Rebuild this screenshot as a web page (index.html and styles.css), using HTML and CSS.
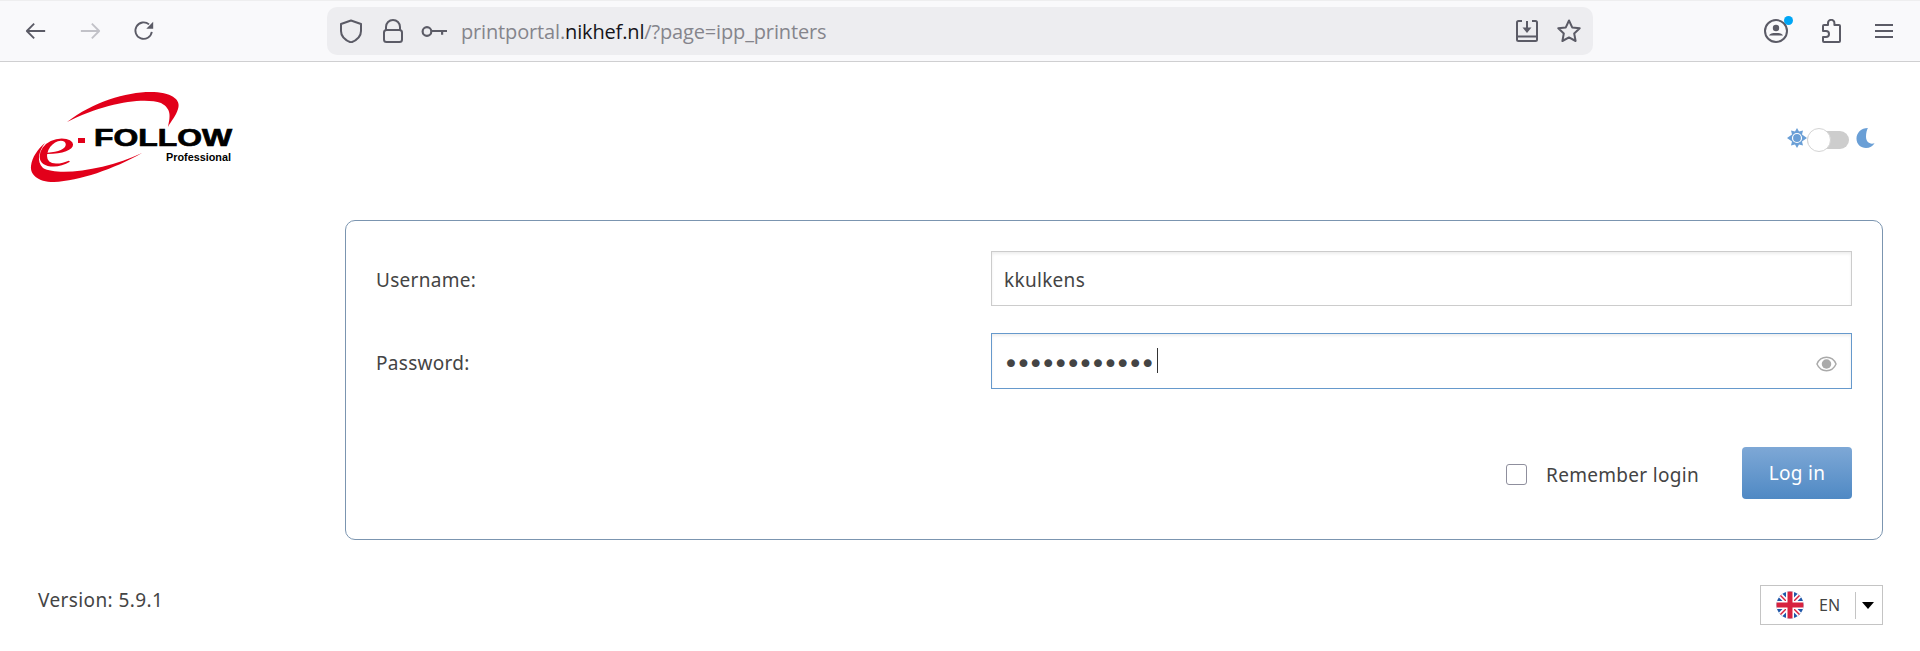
FILE: index.html
```html
<!DOCTYPE HTML>
<html>
    <head>
        <title>e-Follow Login</title>
        <link rel="stylesheet" href="styles.css">
    </head>

    <body>
        <div class="toolbar">
            <div class="nav-buttons">
                <svg class="icon" viewBox="0 0 24 24"><path d="M22 12H2M10 4l-8 8 8 8"/></svg>
                <svg class="icon icon-off" viewBox="0 0 24 24"><path d="M2 12h20M14 4l8 8-8 8"/></svg>
                <svg class="icon" viewBox="0 0 24 24"><path d="M20.500 13a9 9 0 1 1-3-8.200"/><path class="fill" d="M22 2v7.500h-7.500z"/></svg>
            </div>
            <div class="urlbar">
                <svg class="icon shield" viewBox="0 0 24 24"><path d="M12 1.500l10 3.500v7c0 5.500-5 9.500-10 11.500C7 21.500 2 17.500 2 12V5z"/></svg>
                <svg class="icon lock" viewBox="0 0 24 24"><path d="M5 11V8a7 7 0 0 1 14 0v3"/><rect x="3" y="11" width="18" height="12" rx="2.500"/></svg>
                <svg class="icon key" viewBox="0 0 24 12"><circle cx="5.500" cy="6" r="4"/><path d="M9.500 5.500H24M19.500 5.500V9"/></svg>
                <div class="url"><span class="dim">printportal.</span>nikhef.nl<span class="dim">/?page=ipp_printers</span></div>
                <svg class="icon save" viewBox="0 0 24 24"><path d="M7 2H3.500A1.500 1.500 0 0 0 2 3.500v17A1.500 1.500 0 0 0 3.500 22h17a1.500 1.500 0 0 0 1.500-1.500v-17A1.500 1.500 0 0 0 20.500 2H17M2 17.500h20M12 2v7"/><path class="fill" d="M7.500 8.500h9L12 14z"/></svg>
                <svg class="icon star" viewBox="0 0 24 24"><path d="M12 1.500l3.200 6.900 7.500.9-5.500 5.200 1.400 7.500L12 18.400l-6.600 3.600 1.400-7.500-5.500-5.200 7.500-.9z"/></svg>
            </div>
            <div class="tool-buttons">
                <div class="account">
                    <svg class="icon" viewBox="0 0 24 24"><circle cx="12" cy="12" r="11"/><circle class="fill" cx="12" cy="9" r="3.200"/><path class="fill" d="M5 16.500c1-2 3-2.500 7-2.500s6 .5 7 2.500z"/></svg>
                    <span class="badge"></span>
                </div>
                <svg class="icon puzzle" viewBox="0 0 20 24"><path d="M7 5.500V4a3.200 3.200 0 0 1 6.400 0v2H18a1 1 0 0 1 1 1v15a1 1 0 0 1-1 1H3a1 1 0 0 1-1-1v-4h3a3 3 0 0 0 0-6H2V7a1 1 0 0 1 1-1h4z"/></svg>
                <svg class="icon menu" viewBox="0 0 18 14"><path d="M0 1h18M0 7h18M0 13h18"/></svg>
            </div>
        </div>

        <div class="header">
            <svg class="logo" viewBox="0 0 205 95">
                <path class="swoosh" d="M38 33C65 12 100 2 125 3C145 4 152 12 149 20C147 27 142 32 139 38C141 28 143 20 132 14C115 8 75 14 38 33Z"/>
                <path class="swoosh" d="M113 64C85 80 50 92 25 93C8 93 1 85 2 77C3 68 9 60 16 54C10 62 7 72 14 79C30 88 80 80 113 64Z"/>
                <text class="logo-e" x="8" y="77" textLength="38" lengthAdjust="spacingAndGlyphs">e</text>
                <rect class="swoosh" x="49" y="49" width="7" height="5"/>
                <text class="logo-name" x="65" y="57" textLength="138" lengthAdjust="spacingAndGlyphs">FOLLOW</text>
                <text class="logo-sub" x="137" y="72" textLength="65" lengthAdjust="spacingAndGlyphs">Professional</text>
            </svg>
            <div class="theme-toggle">
                <svg class="theme-icon" viewBox="0 0 20 20">
                    <path class="sun-rays" d="M10 0l2 3.500 4-1-1 4 5 3.500-5 3.500 1 4-4-1-2 3.500-2-3.500-4 1 1-4L0 10l5-3.500-1-4 4 1z"/>
                    <circle cx="10" cy="10" r="4.500" class="sun-ring"/>
                </svg>
                <div class="track"><span class="knob"></span></div>
                <svg class="theme-icon moon" viewBox="0 0 20 21"><path d="M12 0C5 0 0 5 0 11s4.500 10 10 10c4 0 7-2 9-5-5 1.500-9-1-9-7 0-4 1-7 2-9z"/></svg>
            </div>
        </div>

        <div class="login-box">
            <div class="form-row">
                <label class="form-label">Username:</label>
                <input class="text-input" type="text" value="kkulkens">
            </div>
            <div class="form-row">
                <label class="form-label">Password:</label>
                <div class="password-wrap">
                    <input class="text-input focused" type="password" value="kkulkens2024">
                    <span class="caret"></span>
                    <svg class="eye" viewBox="0 0 22 16"><path d="M11 1C6 1 2.500 4.500 1 8c1.500 3.500 5 7 10 7s8.500-3.500 10-7c-1.500-3.500-5-7-10-7z"/><circle cx="11" cy="8" r="5"/></svg>
                </div>
            </div>
            <div class="actions">
                <span class="checkbox"></span>
                <span class="remember">Remember login</span>
                <button class="login-button">Log in</button>
            </div>
        </div>

        <div class="footer">
            <div class="version">Version: 5.9.1</div>
            <div class="language">
                <svg class="flag" viewBox="0 0 28 28">
                    <clipPath id="flag_clip"><circle cx="14" cy="14" r="13.500"/></clipPath>
                    <g clip-path="url(#flag_clip)">
                        <rect width="28" height="28" fill="#1f57a8"/>
                        <path d="M0 0l28 28M28 0L0 28" stroke="#fff" stroke-width="5"/>
                        <path d="M0 0l28 28M28 0L0 28" stroke="#d8223f" stroke-width="1.500"/>
                        <path d="M14 0v28M0 14h28" stroke="#fff" stroke-width="8"/>
                        <path d="M14 0v28M0 14h28" stroke="#d8223f" stroke-width="5"/>
                    </g>
                </svg>
                <span class="lang-code">EN</span>
                <span class="lang-arrow"></span>
            </div>
        </div>
    </body>
</html>
```

FILE: styles.css
```css
body {
    margin: 0;
    font-family: "Noto Sans", sans-serif;
    color: #444;
    background-color: white;
    height: 651px;
    overflow: hidden;
}
.toolbar {
    display: flex;
    align-items: center;
    height: 60px;
    padding-left: 25px;
    background-color: #f9f9fb;
    border-top: 1px solid #eeeeef;
    border-bottom: 1px solid #cfcfd1;
}
.icon {
    fill: none;
    stroke: #5b5b66;
    stroke-width: 2;
    stroke-linejoin: round;
    width: 22px;
    height: 22px;
    flex: none;
}
.icon .fill {
    fill: #5b5b66;
    stroke: none;
}
.icon-off {
    stroke: #c2c2c8;
}
.nav-buttons {
    display: flex;
    gap: 32px;
    width: 302px;
}
.urlbar {
    display: flex;
    align-items: center;
    width: 1266px;
    height: 48px;
    padding-left: 12px;
    box-sizing: border-box;
    background-color: #ededf0;
    border-radius: 10px;
}
.shield {
    width: 24px;
    height: 24px;
}
.lock {
    width: 24px;
    height: 24px;
    margin-left: 18px;
}
.key {
    width: 26px;
    height: 13px;
    margin-left: 16px;
}
.url {
    font-family: "Open Sans", sans-serif;
    font-size: 20px;
    color: #15141a;
    margin-left: 14px;
    flex: 1;
    letter-spacing: -0.15px;
}
.dim {
    color: #85858c;
}
.save {
    width: 24px;
    height: 24px;
}
.star {
    width: 24px;
    height: 24px;
    margin: 0 12px 0 18px;
}
.tool-buttons {
    display: flex;
    align-items: center;
    margin-left: 171px;
}
.account {
    position: relative;
    height: 24px;
}
.account .icon {
    width: 24px;
    height: 24px;
}
.badge {
    position: absolute;
    top: -3px;
    right: -5px;
    width: 9px;
    height: 9px;
    border-radius: 50%;
    background-color: #00a6f5;
}
.puzzle {
    width: 20px;
    height: 24px;
    margin-left: 33px;
}
.menu {
    width: 18px;
    height: 14px;
    margin-left: 34px;
}
.header {
    display: flex;
    justify-content: space-between;
    height: 131px;
    padding: 27px 44px 0 29px;
}
.logo {
    width: 205px;
    height: 95px;
}
.swoosh {
    fill: #e2001a;
}
.logo-e {
    font-family: "Liberation Serif", serif;
    font-style: italic;
    font-size: 60px;
    fill: #e2001a;
}
.logo-name {
    font-family: "Liberation Sans", sans-serif;
    font-weight: bold;
    font-size: 23px;
    stroke: black;
    stroke-width: 0.7px;
}
.logo-sub {
    font-family: "Liberation Sans", sans-serif;
    font-weight: bold;
    font-size: 10px;
}
.theme-toggle {
    display: flex;
    align-items: center;
    height: 24px;
    margin-top: 39px;
}
.theme-icon {
    width: 20px;
    height: 20px;
    margin-top: -4px;
}
.sun-rays {
    fill: #6a9fd6;
}
.sun-ring {
    fill: #6a9fd6;
    stroke: white;
    stroke-width: 1.200;
}
.moon {
    fill: #6a9fd6;
    margin-left: 7px;
}
.track {
    position: relative;
    width: 42px;
    height: 18px;
    background-color: #cdcdcd;
    border-radius: 9px;
}
.knob {
    position: absolute;
    top: -3px;
    left: 0;
    width: 24px;
    height: 24px;
    box-sizing: border-box;
    background-color: white;
    border: 1px solid #d4d4d4;
    border-radius: 50%;
}
.login-box {
    margin: 0 37px 0 345px;
    padding: 30px 30px 40px 30px;
    border: 1px solid #7b95b0;
    border-radius: 10px;
}
.form-row {
    display: flex;
    align-items: center;
    margin-bottom: 27px;
    font-size: 19px;
    letter-spacing: 0.3px;
}
.form-label {
    width: 615px;
    padding-top: 3px;
    flex: none;
}
.text-input {
    display: block;
    width: 100%;
    height: 55px;
    box-sizing: border-box;
    padding: 2px 12px 0;
    font-family: "Noto Sans", sans-serif;
    font-size: 19px;
    letter-spacing: 0.3px;
    color: #444;
    background-color: white;
    border: 1px solid #cccccc;
    border-radius: 0;
    outline: none;
    box-shadow: inset 0 2px 3px rgba(0,0,0,0.07);
}
.focused {
    height: 56px;
    padding: 4px 11px 0;
    border-color: #6699cc;
    font-family: "DejaVu Sans", sans-serif;
    font-size: 27px;
    letter-spacing: -3.500px;
}
.password-wrap {
    position: relative;
    flex: 1;
}
.caret {
    position: absolute;
    top: 15px;
    left: 166px;
    width: 1px;
    height: 25px;
    background-color: #333;
}
.eye {
    position: absolute;
    top: 23px;
    right: 15px;
    width: 21px;
    height: 16px;
    fill: none;
    stroke: #aaaaaa;
    stroke-width: 1.500;
}
.eye circle {
    fill: #aaaaaa;
    stroke: none;
}
.actions {
    display: flex;
    align-items: center;
    justify-content: flex-end;
    margin-top: 58px;
}
.checkbox {
    width: 21px;
    height: 21px;
    box-sizing: border-box;
    border: 1px solid #8f8f9d;
    border-radius: 3px;
    margin-top: 3px;
}
.remember {
    font-size: 19px;
    letter-spacing: 0.3px;
    margin: 3px 43px 0 19px;
}
.login-button {
    width: 110px;
    height: 52px;
    font-family: "Noto Sans", sans-serif;
    font-size: 19px;
    letter-spacing: 0.3px;
    color: white;
    background: linear-gradient(#7ea8d6, #4f89c4);
    border: none;
    border-radius: 4px;
}
.footer {
    display: flex;
    justify-content: space-between;
    margin: 45px 37px 0 38px;
}
.version {
    font-size: 19px;
    letter-spacing: 0.4px;
    margin-top: 2px;
}
.language {
    display: flex;
    align-items: center;
    width: 123px;
    height: 40px;
    box-sizing: border-box;
    padding-left: 15px;
    border: 1px solid #c4c4c4;
}
.flag {
    width: 28px;
    height: 28px;
}
.lang-code {
    font-size: 16px;
    margin-left: 15px;
    width: 36px;
    line-height: 27px;
    border-right: 1px solid #c4c4c4;
}
.lang-arrow {
    margin-left: 6px;
    border-top: 7px solid black;
    border-left: 6.500px solid transparent;
    border-right: 6.500px solid transparent;
}
```
